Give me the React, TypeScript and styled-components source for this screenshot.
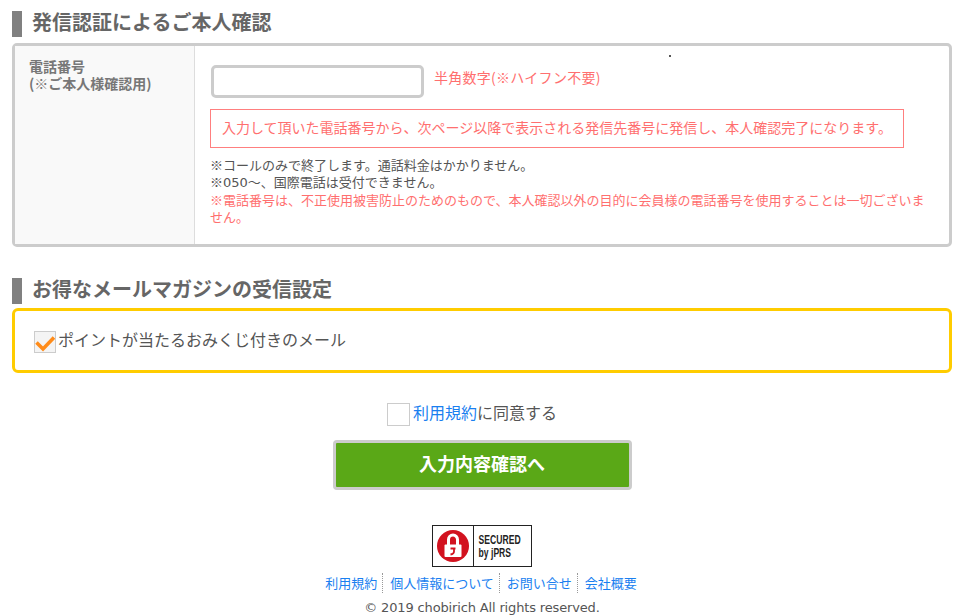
import * as React from 'react';
import styled, { createGlobalStyle } from 'styled-components';

const GlobalStyle = createGlobalStyle`
    html, body {
        margin: 0;
        padding: 0;
        background: #fff;
    }
    body {
        font-family: "Noto Sans CJK JP", sans-serif;
        color: #555;
    }
`;

const Page = styled.div`
    width: 940px;
    height: 616px;
    padding: 11px 21px 0 12px;
    overflow: hidden;
`;

const SectionTitle = styled.h2<{ $gap: number }>`
    margin: 0 0 ${({ $gap }) => $gap}px;
    height: 26px;
    padding-left: 10px;
    border-left: 10px solid #808080;
    font-size: 20px;
    line-height: 22px;
    font-weight: 700;
    color: #666;
`;

const FormBox = styled.div`
    position: relative;
    display: flex;
    height: 204px;
    box-sizing: border-box;
    border: 3px solid #ccc;
    border-radius: 5px;
    margin-bottom: 31px;
`;

const Dot = styled.span`
    position: absolute;
    left: 654px;
    top: 9px;
    width: 2px;
    height: 2px;
    background: #555;
`;

const LabelCell = styled.div`
    width: 165px;
    padding: 12px 0 0 14px;
    background: #f9f9f9;
    border-right: 1px solid #ddd;
    font-size: 14px;
    line-height: 17px;
    font-weight: 700;
    color: #777;
`;

const FieldCell = styled.div`
    flex: 1;
    padding: 19px 20px 0 15px;
`;

const InputRow = styled.div`
    display: flex;
    align-items: flex-start;
    gap: 10px;
    margin-left: 1px;
`;

const PhoneInput = styled.input`
    width: 213px;
    height: 33px;
    box-sizing: border-box;
    border: 3px solid #ccc;
    border-radius: 5px;
    background: #fff;
    outline: none;
`;

const Hint = styled.span`
    font-size: 14px;
    line-height: 24px;
    letter-spacing: 0.25px;
    color: #ff6f6f;
`;

const Notice = styled.p`
    width: 694px;
    height: 39px;
    box-sizing: border-box;
    margin: 11px 0 8px;
    padding: 0 11px;
    border: 1px solid #ff7f7f;
    font-size: 14px;
    line-height: 35px;
    color: #ff6f6f;
    white-space: nowrap;
`;

const Note = styled.p<{ $warn?: boolean }>`
    margin: 0;
    font-size: 13px;
    line-height: 17px;
    color: ${({ $warn }) => ($warn ? '#ff6f6f' : '#555')};
`;

const Digits = styled.span`
    font-family: "DejaVu Sans", sans-serif;
`;

const MailBox = styled.div`
    display: flex;
    align-items: center;
    height: 65px;
    box-sizing: border-box;
    padding: 0 0 0 19px;
    border: 3px solid #ffcc00;
    border-radius: 6px;
    margin-bottom: 28px;
`;

const CheckLabel = styled.label`
    display: flex;
    align-items: center;
    font-size: 16px;
    color: #555;
`;

const LabelText = styled.span`
    display: block;
    line-height: 20px;
    margin-bottom: 4px;
`;

const CheckBox = styled.span<{ $size: number }>`
    display: block;
    flex: none;
    width: ${({ $size }) => $size}px;
    height: ${({ $size }) => $size}px;
    box-sizing: border-box;
    border: 1px solid #ccc;
    background: #fff;
    margin: 2px 3px 0 0;
`;

const CheckedBox = styled(CheckBox)`
    background: #f4f4f4;
    margin-right: 2px;
`;

const Agree = styled.div`
    display: flex;
    justify-content: center;
    padding-right: 20px;
    margin-bottom: 14px;
`;

const TermsLink = styled.a`
    color: #1a7ff0;
    text-decoration: none;
`;

const SubmitButton = styled.button`
    display: block;
    width: 299px;
    height: 50px;
    margin: 0 auto 35px;
    box-sizing: border-box;
    border: 3px solid #ccc;
    border-radius: 4px;
    background: #5aa817;
    color: #fff;
    font-family: inherit;
    font-size: 18px;
    font-weight: 700;
    padding: 0 0 4px;
`;

const Seal = styled.div`
    display: flex;
    width: 100px;
    height: 42px;
    margin: 0 auto 6px;
    box-sizing: border-box;
    border: 1px solid #222;
`;

const SealIcon = styled.div`
    flex: none;
    display: flex;
    align-items: center;
    justify-content: center;
    width: 40px;
    border-right: 1px solid #222;
`;

const SealText = styled.div`
    flex: 1;
    min-width: 0;
    padding: 7px 0 0 7px;
    font-family: "Liberation Sans", sans-serif;
    font-size: 13px;
    line-height: 13px;
    font-weight: 700;
    color: #222;
    transform: scaleX(0.66);
    transform-origin: left top;
    white-space: nowrap;
`;

const FooterLinks = styled.ul`
    display: flex;
    justify-content: center;
    margin: 0 0 7px;
    padding: 0 4px 0 0;
    list-style: none;
    font-size: 13px;
    line-height: 20px;
`;

const FooterItem = styled.li`
    padding: 0 5px 0 7px;
    border-left: 1px dotted #999;
    &:first-child {
        border-left: none;
    }
`;

const Copy = styled.p`
    margin: 0;
    text-align: center;
    font-family: "DejaVu Sans", sans-serif;
    font-size: 13px;
    line-height: 16px;
    letter-spacing: -0.15px;
    color: #555;
`;

const links = ['利用規約', '個人情報について', 'お問い合せ', '会社概要'];

const App: React.FC = () => {
    return (
        <>
            <GlobalStyle />
            <Page>
                <SectionTitle $gap={6}>発信認証によるご本人確認</SectionTitle>
                <FormBox>
                    <Dot />
                    <LabelCell>
                        電話番号
                        <br />
                        (※ご本人様確認用)
                    </LabelCell>
                    <FieldCell>
                        <InputRow>
                            <PhoneInput type="text" />
                            <Hint>半角数字(※ハイフン不要)</Hint>
                        </InputRow>
                        <Notice>
                            入力して頂いた電話番号から、次ページ以降で表示される発信先番号に発信し、本人確認完了になります。
                        </Notice>
                        <Note>※コールのみで終了します。通話料金はかかりません。</Note>
                        <Note>
                            ※<Digits>050</Digits>～、国際電話は受付できません。
                        </Note>
                        <Note $warn>
                            ※電話番号は、不正使用被害防止のためのもので、本人確認以外の目的に会員様の電話番号を使用することは一切ございません。
                        </Note>
                    </FieldCell>
                </FormBox>

                <SectionTitle $gap={4}>お得なメールマガジンの受信設定</SectionTitle>
                <MailBox>
                    <CheckLabel>
                        <CheckedBox $size={22}>
                            <svg width="20" height="20" viewBox="0 0 20 20">
                                <path
                                    d="M1.5 10.5 L8 17 L19 5.5"
                                    fill="none"
                                    stroke="#ff8c1a"
                                    strokeWidth="3.6"
                                />
                            </svg>
                        </CheckedBox>
                        <LabelText>ポイントが当たるおみくじ付きのメール</LabelText>
                    </CheckLabel>
                </MailBox>

                <Agree>
                    <CheckLabel>
                        <CheckBox $size={23} />
                        <LabelText>
                            <TermsLink href="#">利用規約</TermsLink>に同意する
                        </LabelText>
                    </CheckLabel>
                </Agree>
                <SubmitButton type="button">入力内容確認へ</SubmitButton>

                <Seal>
                    <SealIcon>
                        <svg width="32" height="32" viewBox="0 0 32 32">
                            <circle cx="16" cy="16" r="16" fill="#d2121f" />
                            <path
                                d="M11.5 16 V9.5 a4.5 4.5 0 0 1 9 0 V16"
                                fill="none"
                                stroke="#fff"
                                strokeWidth="3"
                            />
                            <rect x="7.5" y="14.5" width="17" height="12.5" rx="1" fill="#fff" />
                            <path
                                d="M13.5 18.5 h5 M17 18.5 v3 q0 2.5 -3.5 3"
                                fill="none"
                                stroke="#d2121f"
                                strokeWidth="1.8"
                            />
                        </svg>
                    </SealIcon>
                    <SealText>
                        SECURED
                        <br />
                        by jPRS
                    </SealText>
                </Seal>

                <FooterLinks>
                    {links.map((label) => (
                        <FooterItem key={label}>
                            <TermsLink href="#">{label}</TermsLink>
                        </FooterItem>
                    ))}
                </FooterLinks>
                <Copy>© 2019 chobirich All rights reserved.</Copy>
            </Page>
        </>
    );
};

export default App;
